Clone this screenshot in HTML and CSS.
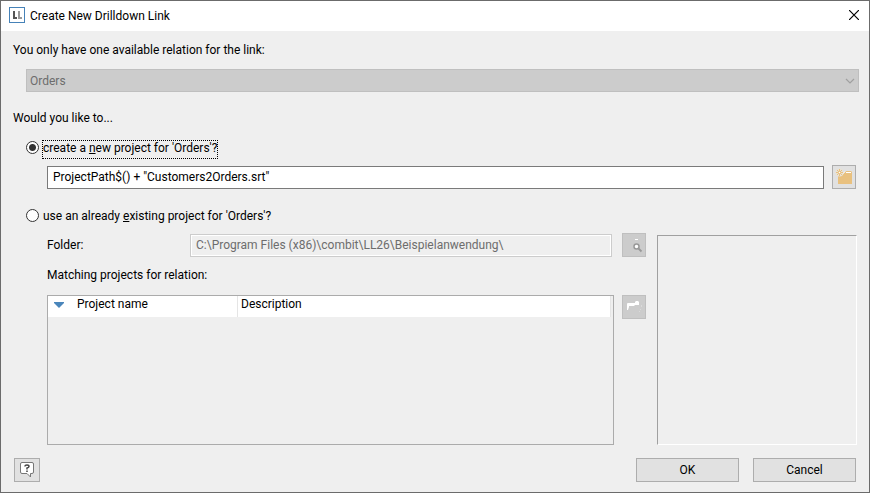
FILE: index.html
```html
<!DOCTYPE html>
<html lang="en">
<head>
<meta charset="utf-8">
<meta name="viewport" content="width=device-width, initial-scale=1">
<title>Create New Drilldown Link</title>
<link rel="stylesheet" href="styles.css">
</head>
<body>
<form class="dialog">
  <header class="titlebar">
    <svg class="logo" width="16" height="16" viewBox="0 0 16 16" aria-hidden="true">
      <rect x="0.5" y="0.5" width="15" height="15" fill="#fff" stroke="#4682b8"/>
      <path d="M5 4v7M4 11h4" fill="none" stroke="#555" stroke-width="2"/>
      <path d="M10 4v7M9 11h4" fill="none" stroke="#999" stroke-width="2"/>
    </svg>
    <h1 class="title">Create New Drilldown Link</h1>
    <button class="close" type="button" aria-label="Close">
      <svg width="10" height="10" viewBox="0 0 10 10"><path d="M0 0l10 10M10 0L0 10" stroke="#000" stroke-width="1.2"/></svg>
    </button>
  </header>
  <main class="content">
    <label class="text" for="relation">You only have one available relation for the link:</label>
    <div class="select-wrap">
      <select class="relation" id="relation" disabled><option>Orders</option></select>
      <svg class="chevron" width="10" height="6" viewBox="0 0 10 6" aria-hidden="true"><path d="M1 1l4 4 4-4" fill="none" stroke="#a0a0a0" stroke-width="1.2"/></svg>
    </div>
    <p class="text question">Would you like to...</p>

    <div class="choice first">
      <input class="radio" type="radio" name="mode" id="create" checked>
      <label class="choice-label focused" for="create">create a <u>n</u>ew project for 'Orders'?</label>
    </div>
    <div class="path-row">
      <input class="field path" type="text" aria-label="New project path" value="ProjectPath$() + &quot;Customers2Orders.srt&quot;">
      <button class="tool" type="button" aria-label="New project file">
        <svg width="22" height="22" viewBox="0 0 22 22">
          <path d="M5 8h5l3-3h5l1 1v12H5z" fill="#e9c17f"/>
          <path d="M9 8.500l3-3M13 6.500h5" stroke="#fff" fill="none"/>
          <circle cx="6.500" cy="6.500" r="4" fill="#e8e2d6"/>
          <path d="M6.500 3v7M3 6.500h7M4 4l5 5M9 4l-5 5" stroke="#e9c17f"/>
          <circle cx="6.500" cy="6.500" r="1.500" fill="#e9c17f"/>
          <circle cx="6.500" cy="6.500" r=".8" fill="#fff"/>
        </svg>
      </button>
    </div>

    <div class="choice second">
      <input class="radio" type="radio" name="mode" id="existing">
      <label class="choice-label" for="existing">use an already <u>e</u>xisting project for 'Orders'?</label>
    </div>
    <div class="existing">
      <section class="projects">
        <label class="text folder-label" for="folder">Folder:</label>
        <input class="field folder" id="folder" type="text" disabled value="C:\Program Files (x86)\combit\LL26\Beispielanwendung\">
        <button class="tool" type="button" disabled aria-label="Browse folder">
          <svg width="22" height="22" viewBox="0 0 22 22">
            <path d="M12 5.500h3" stroke="#fff"/>
            <circle cx="13.500" cy="12.500" r="2.500" fill="#fff" stroke="#999" stroke-width="1.500"/>
            <path d="M15.500 14.500l3 3" stroke="#999" stroke-width="1.800"/>
          </svg>
        </button>
        <p class="text matching" id="matching">Matching projects for relation:</p>
        <div class="list">
          <table class="table" aria-labelledby="matching">
            <thead>
              <tr>
                <th class="name"><svg class="sort" width="10" height="6" viewBox="0 0 10 6" aria-hidden="true"><path d="M0 0h10v1L5 6 0 1z" fill="#4a86bb"/></svg>Project name</th>
                <th>Description</th>
              </tr>
            </thead>
          </table>
        </div>
        <button class="tool" type="button" disabled aria-label="Open project">
          <svg width="22" height="22" viewBox="0 0 22 22">
            <path d="M4 14V8q0-1 1-1h7V6l1-1h2l1 1v3h-4l-1 1H6v1l-1 3z" fill="#fff"/>
            <path d="M18.500 9v2M17.500 13v1M16.500 15v1" stroke="#dadada"/>
          </svg>
        </button>
      </section>
      <div class="preview"></div>
    </div>

    <footer class="footer">
      <button class="button help" type="button" aria-label="Help">
        <svg width="14" height="16" viewBox="0 0 14 16">
          <path d="M2 .5h10q1.500 0 1.500 1.500v8q0 1.500-1.500 1.500h-1.500V15L7 11.500H2Q.5 11.500.5 10V2Q.5.500 2 .500z" fill="#fff" stroke="#777"/>
          <path d="M5 4.500V4q0-1 2-1t2 1.500Q9 5.500 7 6v1.500M7 8.500V10" fill="none" stroke="#444" stroke-width="1.500"/>
        </svg>
      </button>
      <button class="button action" type="submit">OK</button>
      <button class="button action" type="button">Cancel</button>
    </footer>
  </main>
</form>
</body>
</html>
```
FILE: styles.css
```css
* { box-sizing: border-box; }

body, h1, p { margin: 0; }

body, button, input, select {
  font-family: Roboto, "Open Sans", sans-serif;
  font-size: 12px;
  line-height: 16px;
  color: #000;
}

.dialog {
  display: flex;
  flex-direction: column;
  min-height: 100vh;
  border: 1px solid #6b6b6b;
  background: #efefef;
}

.titlebar {
  display: flex;
  align-items: center;
  height: 30px;
  padding: 0 10px 2px 8px;
  background: #fff;
}

.title {
  flex: 1;
  margin-left: 5px;
  padding-top: 2px;
  font-size: 12px;
  font-weight: 400;
}

.close {
  display: flex;
  padding: 0;
  border: 0;
  background: none;
}

.content {
  display: flex;
  flex: 1;
  flex-direction: column;
  padding: 11px 13px 10px 12px;
}

.text { line-height: 16px; }

.select-wrap {
  display: grid;
  align-items: center;
  margin: 11px -3px 0 13px;
}

.relation {
  grid-area: 1 / 1;
  width: 100%;
  height: 23px;
  padding: 0 3px;
  border: 1px solid #bfbfbf;
  border-radius: 0;
  background: #ccc;
  color: #6d6d6d;
  opacity: 1;
  appearance: none;
}

.chevron {
  grid-area: 1 / 1;
  justify-self: end;
  margin-right: 4px;
}

.question { margin-top: 18px; }

.choice {
  display: flex;
  height: 19px;
  padding-left: 13px;
}

.first { margin-top: 14px; }
.second { margin-top: 19px; }

.radio {
  width: 13px;
  height: 13px;
  margin: 1px 3px 0 0;
  border: 1px solid #333;
  border-radius: 50%;
  background: #fff;
  appearance: none;
}

.radio:checked { background: radial-gradient(circle, #333 0 3px, #fff 4px); }

.choice-label {
  border: 1px dotted transparent;
  line-height: 15px;
}

.focused { border-color: #000; }

.path-row {
  display: flex;
  align-items: flex-end;
  gap: 8px;
  margin: 6px 0 0 34px;
}

.field {
  min-width: 0;
  height: 23px;
  padding: 0 5px 1px;
  border: 1px solid #7a7a7a;
  border-radius: 0;
  background: #fff;
}

.path { flex: 1; }

.tool {
  display: flex;
  width: 24px;
  height: 24px;
  padding: 0;
  border: 1px solid #adadad;
  background: #e1e1e1;
}

.tool:disabled {
  border-color: #bfbfbf;
  background: #ccc;
}

.existing {
  display: flex;
  flex: 1;
  gap: 11px;
  margin: 6px -1px 0 34px;
}

.projects {
  display: grid;
  flex: 1;
  grid-template-columns: 143px 1fr 24px;
  grid-template-rows: 24px 16px 1fr;
  row-gap: 10px;
}

.folder-label { padding-top: 4px; }

.folder {
  align-self: end;
  margin-right: 10px;
  border-color: #ccc;
  background: #efefef;
  box-shadow: inset 0 0 0 1px #fff;
  color: #6d6d6d;
}

.matching { grid-column: 1 / -1; }

.list {
  grid-column: 1 / 3;
  margin: 2px 8px 0 0;
  padding-right: 2px;
  border: 1px solid #ababab;
}

.projects .list + .tool { margin-top: 2px; }

.table {
  width: 100%;
  border-spacing: 0;
  table-layout: fixed;
}

.table th {
  height: 21px;
  padding: 0 3px;
  border-right: 1px solid #e5e5e5;
  background: #fff;
  font-weight: 400;
  line-height: 16px;
  text-align: left;
  vertical-align: top;
}

.table .name {
  width: 190px;
  padding-left: 6px;
}

.sort { margin-right: 13px; }

.preview {
  flex: 0 0 200px;
  margin-top: 2px;
  border: 1px solid #fff;
  border-top-color: #a0a0a0;
  border-left-color: #a0a0a0;
}

.footer {
  display: flex;
  gap: 14px;
  margin: 13px 0 0 1px;
}

.button {
  height: 24px;
  padding: 0 0 1px;
  border: 1px solid #adadad;
  background: #e1e1e1;
}

.action { width: 103px; }

.help {
  display: flex;
  align-items: center;
  justify-content: center;
  width: 26px;
  margin-right: auto;
}
```
